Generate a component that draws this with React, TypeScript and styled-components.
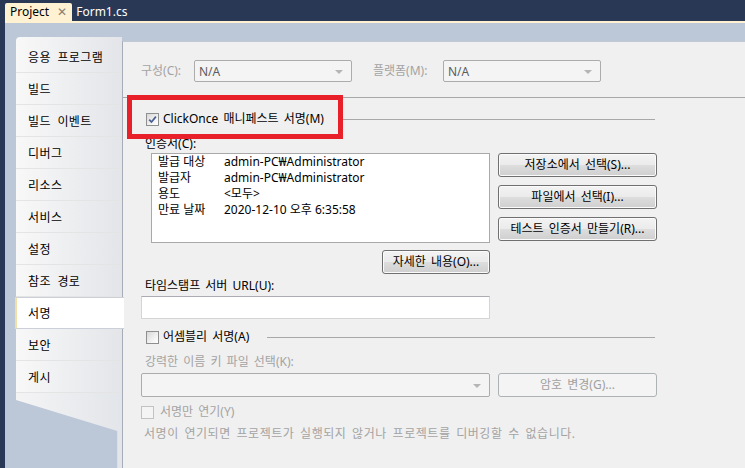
import React from 'react';
import styled, { createGlobalStyle, css } from 'styled-components';

const GlobalStyle = createGlobalStyle`
  html, body { margin: 0; padding: 0; background: #293955; }
  body {
    font-family: "Noto Sans", "Noto Sans CJK KR", sans-serif;
    font-size: 12px;
    color: #000;
  }
  * { box-sizing: border-box; }
`;

const Shell = styled.div`
  width: 745px;
  height: 468px;
  display: flex;
  flex-direction: column;
  background: #293955;
  overflow: hidden;
`;

const TabBar = styled.div`
  height: 21px;
  padding: 3px 0 0 5px;
  display: flex;
  align-items: stretch;
  gap: 4px;
`;

const Tab = styled.div<{ $active?: boolean }>`
  display: flex;
  align-items: center;
  gap: 8px;
  padding: 0 5px 0 5px;
  line-height: 18px;
  border-radius: 2px 2px 0 0;
  ${p =>
    p.$active
      ? css`
          background: #fff2d2;
          color: #000;
        `
      : css`
          color: #fff;
          padding-left: 0;
        `}
`;

const TabClose = styled.span`
  color: #8a8070;
  font-size: 12px;
  line-height: 1;
`;

const Workspace = styled.div`
  flex: 1;
  display: flex;
  margin-left: 5px;
  border-top: 2px solid #fff2d2;
  background: #bcc7d8;
  padding: 14px 0 0 11px;
  min-height: 0;
`;

const Nav = styled.div`
  width: 106px;
  display: flex;
  flex-direction: column;
  position: relative;
  z-index: 2;
  word-spacing: 3px;
`;

const NavHead = styled.div`
  height: 4px;
  border-radius: 4px 0 0 0;
  background: linear-gradient(to right, #f8f8f8, #e3e5e9);
`;

const NavItem = styled.div<{ $active?: boolean }>`
  height: 32px;
  display: flex;
  align-items: center;
  padding-left: 12px;
  letter-spacing: 0.4px;
  background: linear-gradient(to right, #f8f8f8, #e3e5e9);
  border-bottom: 1px solid #e4e4e4;
  ${p =>
    p.$active &&
    css`
      background: #ffffff;
      margin: 0 -2px 0 -1px;
      padding-left: 11px;
      border-left: 2px solid #f2dfa8;
      border-top: 1px solid #cbd0d8;
      border-bottom: 1px solid #cbd0d8;
    `}
`;

const NavTail = styled.div`
  flex: 1;
  background: linear-gradient(to right, #f4f4f5, #e2e5e9);
  clip-path: polygon(0 0, 100% 0, 100% 100%, 95.5% 100%, 95.5% 38px, 0 7px);
`;

const Content = styled.div`
  flex: 1;
  margin-top: 4px;
  background: #f0f0f0;
  border-top: 1px solid #c3c9d2;
  border-left: 1px solid #a6adb9;
  display: flex;
  flex-direction: column;
  align-items: flex-start;
  position: relative;
  color: #000;
  word-spacing: 2px;
`;

const ConfigRow = styled.div`
  margin: 18px 0 0 18px;
  height: 22px;
  display: flex;
  align-items: center;
`;

const Label = styled.div<{ $w?: number; $disabled?: boolean; $ml?: number }>`
  line-height: 14px;
  white-space: nowrap;
  color: ${p => (p.$disabled ? '#a3a3a3' : '#000')};
  ${p => p.$w !== undefined && css`width: ${p.$w}px; flex: none;`}
  ${p => p.$ml !== undefined && css`margin-left: ${p.$ml}px;`}
`;

const Note = styled.div`
  line-height: 14px;
  white-space: nowrap;
  color: #a3a3a3;
  letter-spacing: 0.55px;
`;

const Combo = styled.div<{ $w: number; $h?: number }>`
  width: ${p => p.$w}px;
  height: ${p => p.$h ?? 22}px;
  flex: none;
  border: 1px solid #acacac;
  border-radius: 2px;
  background: #f4f4f4;
  color: #5d5d5d;
  display: flex;
  align-items: center;
  padding-left: 4px;
  position: relative;
  &::after {
    content: '';
    position: absolute;
    right: 8px;
    top: 50%;
    margin-top: -1px;
    border-left: 4px solid transparent;
    border-right: 4px solid transparent;
    border-top: 4px solid #b5b5b5;
  }
`;

const Separator = styled.div`
  margin-top: 15px;
  height: 1px;
  align-self: stretch;
  background: #a8a8a8;
`;

const GroupHeader = styled.div<{ $mt: number }>`
  margin-top: ${p => p.$mt}px;
  height: 14px;
  align-self: stretch;
  padding-left: 23px;
  padding-right: 90px;
  display: flex;
  align-items: center;
  gap: 4px;
  position: relative;
`;

const GroupLine = styled.div<{ $gap: number }>`
  flex: 1;
  height: 1px;
  margin-left: ${p => p.$gap}px;
  background: #a8a8a8;
`;

const Highlight = styled.div`
  position: absolute;
  left: 4px;
  top: -17px;
  width: 216px;
  height: 44px;
  border: 5px solid #e8202a;
  z-index: 3;
  pointer-events: none;
`;

const CheckBox = styled.span<{ $disabled?: boolean }>`
  width: 13px;
  height: 13px;
  flex: none;
  display: inline-flex;
  align-items: center;
  justify-content: center;
  border: 1px solid ${p => (p.$disabled ? '#c2c2c2' : '#8e8f8f')};
  background: ${p =>
    p.$disabled ? '#f4f4f4' : 'linear-gradient(135deg, #d8d8d8 0%, #f6f6f6 70%, #ffffff 100%)'};
`;

const Indented = styled.div<{ $mt: number; $pl: number }>`
  margin-top: ${p => p.$mt}px;
  padding-left: ${p => p.$pl}px;
  display: flex;
  align-items: center;
`;

const CertRow = styled.div`
  margin-top: 2px;
  padding-left: 28px;
  display: flex;
  gap: 8px;
`;

const CertBox = styled.div`
  width: 339px;
  height: 90px;
  background: #fff;
  border: 1px solid #a9a9a9;
  padding: 0 0 0 6px;
  display: grid;
  grid-template-columns: 66px auto;
  grid-auto-rows: 16px;
  align-content: start;
  line-height: 16px;
  white-space: nowrap;
  word-spacing: 0;
`;

const ButtonColumn = styled.div`
  display: flex;
  flex-direction: column;
  gap: 8px;
`;

const Button = styled.button<{ $w: number }>`
  width: ${p => p.$w}px;
  height: 24px;
  flex: none;
  padding: 0;
  font: inherit;
  word-spacing: 2px;
  color: #000;
  border: 1px solid #707070;
  border-radius: 3px;
  background: linear-gradient(#f3f3f3 0%, #ebebeb 48%, #dddddd 52%, #cfcfcf 100%);
  box-shadow: inset 0 0 0 1px #fbfbfb;
  display: flex;
  align-items: center;
  justify-content: center;
  line-height: 14px;
  &:disabled {
    color: #a0a0a0;
    border-color: #adb2b5;
    background: #f4f4f4;
    box-shadow: none;
  }
`;

const DetailsRow = styled.div`
  margin-top: 7px;
  width: 367px;
  display: flex;
  justify-content: flex-end;
`;

const TextInput = styled.div`
  width: 349px;
  height: 23px;
  background: #fff;
  border: 1px solid #d5d5d5;
  border-top-color: #abadb3;
`;

const KeyRow = styled.div`
  margin-top: 4px;
  padding-left: 18px;
  display: flex;
  align-items: center;
  gap: 8px;
`;

const DeferRow = styled.div`
  margin-top: 8px;
  padding-left: 18px;
  height: 14px;
  display: flex;
  align-items: center;
  gap: 6px;
`;

const Check = () => (
  <svg width="9" height="9" viewBox="0 0 9 9">
    <path d="M1.2 4.6 L3.5 7 L7.9 1.6" fill="none" stroke="#4b5f94" strokeWidth="1.7" />
  </svg>
);

const navItems = [
  '응용 프로그램',
  '빌드',
  '빌드 이벤트',
  '디버그',
  '리소스',
  '서비스',
  '설정',
  '참조 경로',
  '서명',
  '보안',
  '게시',
];

const certRows: [string, string][] = [
  ['발급 대상', 'admin-PC₩Administrator'],
  ['발급자', 'admin-PC₩Administrator'],
  ['용도', '<모두>'],
  ['만료 날짜', '2020-12-10 오후 6:35:58'],
];

export default function App() {
  return (
    <Shell>
      <GlobalStyle />
      <TabBar>
        <Tab $active>
          Project
          <TabClose>✕</TabClose>
        </Tab>
        <Tab>Form1.cs</Tab>
      </TabBar>
      <Workspace>
        <Nav>
          <NavHead />
          {navItems.map(item => (
            <NavItem key={item} $active={item === '서명'}>
              {item}
            </NavItem>
          ))}
          <NavTail />
        </Nav>
        <Content>
          <ConfigRow>
            <Label $w={53} $disabled>
              구성(C):
            </Label>
            <Combo $w={158}>N/A</Combo>
            <Label $w={70} $ml={21} $disabled>
              플랫폼(M):
            </Label>
            <Combo $w={158}>N/A</Combo>
          </ConfigRow>
          <Separator />
          <GroupHeader $mt={14}>
            <Highlight />
            <CheckBox>
              <Check />
            </CheckBox>
            <Label>ClickOnce 매니페스트 서명(M)</Label>
            <GroupLine $gap={12} />
          </GroupHeader>
          <Indented $mt={11} $pl={22}>
            <Label>인증서(C):</Label>
          </Indented>
          <CertRow>
            <CertBox>
              {certRows.map(([k, v]) => (
                <React.Fragment key={k}>
                  <span>{k}</span>
                  <span>{v}</span>
                </React.Fragment>
              ))}
            </CertBox>
            <ButtonColumn>
              <Button $w={159}>저장소에서 선택(S)...</Button>
              <Button $w={159}>파일에서 선택(I)...</Button>
              <Button $w={159}>테스트 인증서 만들기(R)...</Button>
            </ButtonColumn>
          </CertRow>
          <DetailsRow>
            <Button $w={108}>자세한 내용(O)...</Button>
          </DetailsRow>
          <Indented $mt={5} $pl={22}>
            <Label>타임스탬프 서버 URL(U):</Label>
          </Indented>
          <Indented $mt={3} $pl={18}>
            <TextInput />
          </Indented>
          <GroupHeader $mt={11}>
            <CheckBox />
            <Label>어셈블리 서명(A)</Label>
            <GroupLine $gap={14} />
          </GroupHeader>
          <Indented $mt={11} $pl={22}>
            <Label $disabled>강력한 이름 키 파일 선택(K):</Label>
          </Indented>
          <KeyRow>
            <Combo $w={349} $h={24} />
            <Button $w={159} disabled>
              암호 변경(G)...
            </Button>
          </KeyRow>
          <DeferRow>
            <CheckBox $disabled />
            <Label $disabled>서명만 연기(Y)</Label>
          </DeferRow>
          <Indented $mt={8} $pl={21}>
            <Note>서명이 연기되면 프로젝트가 실행되지 않거나 프로젝트를 디버깅할 수 없습니다.</Note>
          </Indented>
        </Content>
      </Workspace>
    </Shell>
  );
}
